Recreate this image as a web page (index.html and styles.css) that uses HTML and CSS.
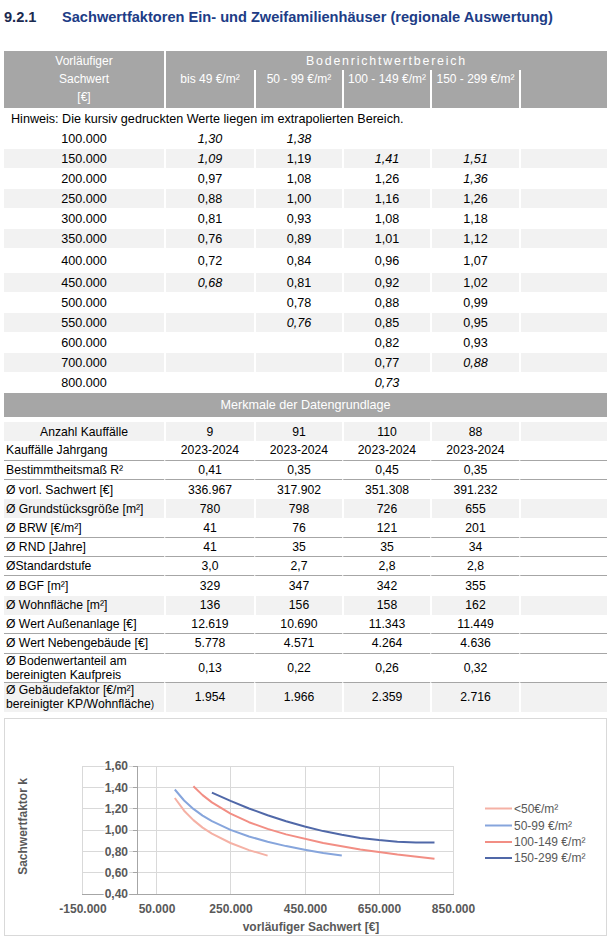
FILE: index.html
```html
<!DOCTYPE html>
<html lang="de">

<head>
  <meta charset="UTF-8">
  <meta name="viewport" content="width=device-width, initial-scale=1.0">
  <title>Sachwertfaktoren</title>
  <link rel="stylesheet" href="styles.css">
</head>

<body>
  <div class="page">
    <h1 class="title"><span class="num">9.2.1</span><span>Sachwertfaktoren Ein- und Zweifamilienhäuser (regionale Auswertung)</span></h1>

    <table class="werte">
      <colgroup>
        <col style="width:160px">
        <col style="width:90px">
        <col style="width:88px">
        <col style="width:88px">
        <col style="width:89px">
        <col style="width:88px">
      </colgroup>
      <thead>
        <tr class="h1">
          <th>Vorläufiger</th>
          <th colspan="5" class="brw">Bodenrichtwertbereich</th>
        </tr>
        <tr class="h2">
          <th>Sachwert<br>[€]</th>
          <th>bis 49 €/m²</th>
          <th>50 - 99 €/m²</th>
          <th>100 - 149 €/m²</th>
          <th>150 - 299 €/m²</th>
          <th></th>
        </tr>
      </thead>
      <tbody>
        <tr class="up">
          <td colspan="6" class="hint">Hinweis: Die kursiv gedruckten Werte liegen im extrapolierten Bereich.</td>
        </tr>
        <tr class="up"><td>100.000</td><td><i>1,30</i></td><td><i>1,38</i></td><td></td><td></td><td></td></tr>
        <tr class="up s"><td>150.000</td><td><i>1,09</i></td><td>1,19</td><td><i>1,41</i></td><td><i>1,51</i></td><td></td></tr>
        <tr class="up"><td>200.000</td><td>0,97</td><td>1,08</td><td>1,26</td><td><i>1,36</i></td><td></td></tr>
        <tr class="up s"><td>250.000</td><td>0,88</td><td>1,00</td><td>1,16</td><td>1,26</td><td></td></tr>
        <tr class="up"><td>300.000</td><td>0,81</td><td>0,93</td><td>1,08</td><td>1,18</td><td></td></tr>
        <tr class="up s"><td>350.000</td><td>0,76</td><td>0,89</td><td>1,01</td><td>1,12</td><td></td></tr>
        <tr class="up tall"><td>400.000</td><td>0,72</td><td>0,84</td><td>0,96</td><td>1,07</td><td></td></tr>
        <tr class="up s"><td>450.000</td><td><i>0,68</i></td><td>0,81</td><td>0,92</td><td>1,02</td><td></td></tr>
        <tr class="up"><td>500.000</td><td></td><td>0,78</td><td>0,88</td><td>0,99</td><td></td></tr>
        <tr class="up s"><td>550.000</td><td></td><td><i>0,76</i></td><td>0,85</td><td>0,95</td><td></td></tr>
        <tr class="up"><td>600.000</td><td></td><td></td><td>0,82</td><td>0,93</td><td></td></tr>
        <tr class="up s"><td>700.000</td><td></td><td></td><td>0,77</td><td><i>0,88</i></td><td></td></tr>
        <tr class="up"><td>800.000</td><td></td><td></td><td><i>0,73</i></td><td></td><td></td></tr>
        <tr>
          <td colspan="6" class="band">Merkmale der Datengrundlage</td>
        </tr>
        <tr class="lo s"><td class="c">Anzahl Kauffälle</td><td>9</td><td>91</td><td>110</td><td>88</td><td></td></tr>
        <tr class="lo l"><td>Kauffälle Jahrgang</td><td>2023-2024</td><td>2023-2024</td><td>2023-2024</td><td>2023-2024</td><td></td></tr>
        <tr class="lo l"><td>Bestimmtheitsmaß R²</td><td>0,41</td><td>0,35</td><td>0,45</td><td>0,35</td><td></td></tr>
        <tr class="lo"><td>Ø vorl. Sachwert [€]</td><td>336.967</td><td>317.902</td><td>351.308</td><td>391.232</td><td></td></tr>
        <tr class="lo s"><td>Ø Grundstücksgröße [m²]</td><td>780</td><td>798</td><td>726</td><td>655</td><td></td></tr>
        <tr class="lo l"><td>Ø BRW [€/m²]</td><td>41</td><td>76</td><td>121</td><td>201</td><td></td></tr>
        <tr class="lo l"><td>Ø RND [Jahre]</td><td>41</td><td>35</td><td>35</td><td>34</td><td></td></tr>
        <tr class="lo l"><td>ØStandardstufe</td><td>3,0</td><td>2,7</td><td>2,8</td><td>2,8</td><td></td></tr>
        <tr class="lo"><td>Ø BGF [m²]</td><td>329</td><td>347</td><td>342</td><td>355</td><td></td></tr>
        <tr class="lo s"><td>Ø Wohnfläche [m²]</td><td>136</td><td>156</td><td>158</td><td>162</td><td></td></tr>
        <tr class="lo l"><td>Ø Wert Außenanlage [€]</td><td>12.619</td><td>10.690</td><td>11.343</td><td>11.449</td><td></td></tr>
        <tr class="lo l"><td>Ø Wert Nebengebäude [€]</td><td>5.778</td><td>4.571</td><td>4.264</td><td>4.636</td><td></td></tr>
        <tr class="lo l dbl"><td>Ø Bodenwertanteil am<br>bereinigten Kaufpreis</td><td>0,13</td><td>0,22</td><td>0,26</td><td>0,32</td><td></td></tr>
        <tr class="lo s dbl"><td>Ø Gebäudefaktor [€/m²]<br>bereinigter KP/Wohnfläche<small>)</small></td><td>1.954</td><td>1.966</td><td>2.359</td><td>2.716</td><td></td></tr>
      </tbody>
    </table>

    <div class="chart">
      <svg width="601" height="216" viewBox="5 718 601 216">
        <!-- gridlines -->
        <g stroke="#d9d9d9" stroke-width="1" fill="none">
          <path d="M82 765.5H454M82 786.5H454M82 807.5H454M82 829.5H454M82 850.5H454M82 871.5H454" />
          <path d="M82.5 765V893M156.5 765V893M230.5 765V893M305.5 765V893M379.5 765V893M453.5 765V893" />
        </g>
        <!-- axes -->
        <g stroke="#a6a6a6" stroke-width="1" fill="none">
          <path d="M82 893.5H454" />
          <path d="M137.5 765V894" />
          <path d="M133 765.5H138M133 786.5H138M133 807.5H138M133 829.5H138M133 850.5H138M133 871.5H138M133 893.5H138" />
        </g>
        <g class="ylab">
          <text x="128" y="769">1,60</text>
          <text x="128" y="790.5">1,40</text>
          <text x="128" y="812">1,20</text>
          <text x="128" y="833">1,00</text>
          <text x="128" y="854.5">0,80</text>
          <text x="128" y="876">0,60</text>
          <text x="128" y="897">0,40</text>
        </g>
        <g class="xlab">
          <text x="83" y="911.5">-150.000</text>
          <text x="157" y="911.5">50.000</text>
          <text x="231" y="911.5">250.000</text>
          <text x="305.5" y="911.5">450.000</text>
          <text x="379.5" y="911.5">650.000</text>
          <text x="453.5" y="911.5">850.000</text>
        </g>
        <text class="atitle" x="311" y="929.5">vorläufiger Sachwert [€]</text>
        <text class="atitle" transform="translate(26.5 825.5) rotate(-90)">Sachwertfaktor k</text>

        <!-- curves -->
        <g fill="none" stroke-width="2" stroke-linejoin="round" stroke-linecap="butt">
          <polyline stroke="#f5b1a5" points="174.8,797 184.1,809.7 193.4,819.1 202.6,826.6 211.9,832.6 230.5,842 249,849.1 267.6,854.6" />
          <polyline stroke="#86a5dc" points="174.8,788.5 184.1,799.5 193.4,807.9 202.6,814.6 211.9,820.2 230.5,828.9 249,835.5 267.6,840.7 286.1,845.1 304.7,848.7 323.2,851.9 341.8,854.6" />
          <polyline stroke="#f28e84" points="193.4,785.3 202.6,794.1 211.9,801.4 230.5,812.6 249,821.2 267.6,827.9 286.1,833.4 323.2,842 360.3,848.5 397.4,853.6 434.5,857.8" />
          <polyline stroke="#5068a8" points="211.9,791.7 230.5,799.9 249,807.5 267.6,814.2 286.1,820.2 304.7,825.5 323.2,830.1 341.8,833.8 360.3,836.9 378.9,839.1 397.4,840.7 415.9,841.5 434.5,841.6" />
        </g>

        <!-- legend -->
        <g stroke-width="2">
          <path stroke="#f5b1a5" d="M485 807.5H512" />
          <path stroke="#86a5dc" d="M485 824.5H512" />
          <path stroke="#f28e84" d="M485 841H512" />
          <path stroke="#5068a8" d="M485 857H512" />
        </g>
        <g class="leg">
          <text x="514" y="812">&lt;50€/m²</text>
          <text x="514" y="828.5">50-99 €/m²</text>
          <text x="514" y="845">100-149 €/m²</text>
          <text x="514" y="861">150-299 €/m²</text>
        </g>
      </svg>
    </div>
  </div>
</body>

</html>
```

FILE: styles.css
```css
body {
  margin: 0;
  font-family: "Liberation Sans", Arial, Helvetica, sans-serif;
  color: #000;
  background: #fff;
}

.page {
  padding: 9px 0 0 4px;
  width: 603px;
}

.title {
  display: flex;
  margin: 0 0 25px;
  font-size: 14.6px;
  line-height: 17px;
  font-weight: bold;
  color: #203c86;
}

.title .num {
  width: 58px;
  color: #1b2a50;
}

.werte {
  width: 603px;
  table-layout: fixed;
  border-collapse: separate;
  border-spacing: 0;
  font-size: 12.6px;
}

.werte th,
.werte td {
  padding: 0;
  box-sizing: border-box;
  text-align: center;
  vertical-align: middle;
  font-weight: normal;
}

.werte th + th,
.werte td + td {
  border-left: 2px solid #fff;
}

.werte thead th {
  background-color: #a6a6a6;
  color: #fff;
  font-size: 12px;
}

.h1 th {
  height: 19px;
}

.werte .brw {
  font-size: 12.4px;
  letter-spacing: 1.8px;
}

.h2 th {
  height: 38px;
  line-height: 18px;
  vertical-align: top;
}

.up td {
  height: 20px;
  border-top: 1px solid #fff;
}

.up.tall td {
  height: 24px;
}

.s td {
  background-color: #f2f2f2;
}

.hint {
  text-align: left !important;
  padding-left: 7px !important;
}

.band {
  height: 30px;
  border-top: 1px solid #fff;
  border-bottom: 5px solid #fff;
  background-color: #a6a6a6;
  color: #fff;
}

.lo td {
  height: 19.3px;
  font-size: 12.2px;
}

.lo td:first-child {
  text-align: left;
  padding-left: 2px;
}

.lo td.c {
  text-align: center;
  padding-left: 0;
}

.lo.l td {
  border-bottom: 1px solid #a6a6a6;
}

.lo.dbl td {
  height: 28.6px;
  line-height: 14px;
}

.lo small {
  font-size: 10px;
}

.chart {
  margin-top: 6px;
  width: 603px;
  height: 218px;
  box-sizing: border-box;
  border: 1px solid #d9d9d9;
}

.chart svg {
  display: block;
}

.chart text {
  font-family: "Liberation Sans", Arial, sans-serif;
  font-size: 12px;
  fill: #595959;
}

.ylab text {
  text-anchor: end;
  font-weight: bold;
  stroke: #fff;
  stroke-width: 3px;
  paint-order: stroke;
}

.xlab text {
  text-anchor: middle;
  font-weight: bold;
}

.atitle {
  text-anchor: middle;
  font-weight: bold;
}
```
